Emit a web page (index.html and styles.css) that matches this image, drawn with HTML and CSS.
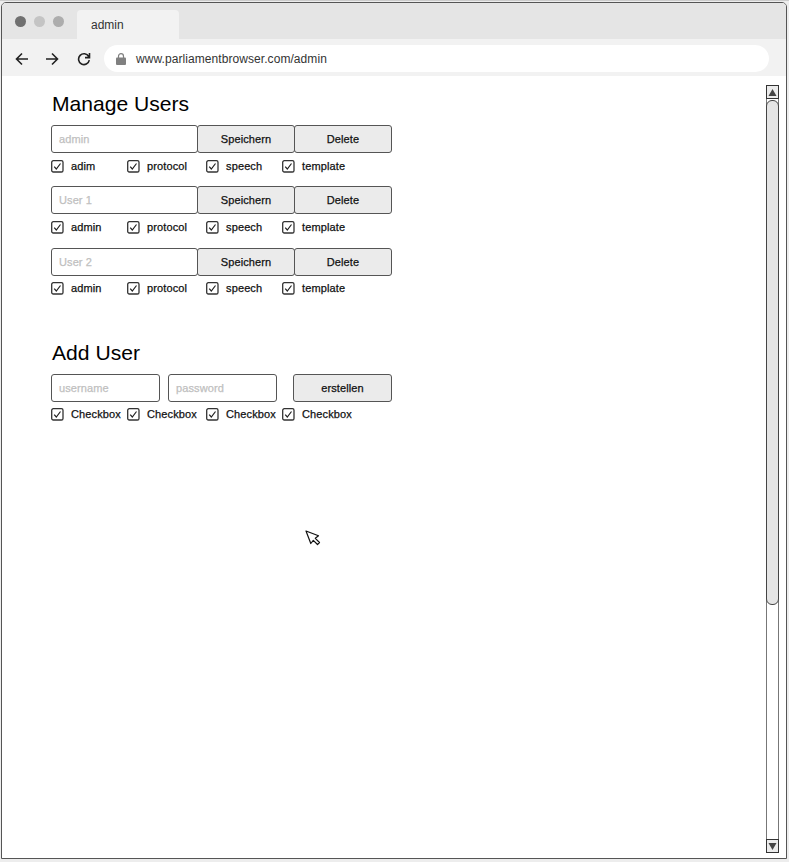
FILE: index.html
```html
<!DOCTYPE html>
<html lang="de">
<head>
<meta charset="utf-8">
<title>admin</title>
<link rel="stylesheet" href="styles.css">
</head>
<body>
<svg class="defs" width="0" height="0" aria-hidden="true">
  <symbol id="check" viewBox="0 0 13 13"><rect x=".7" y=".7" width="11.300" height="11.300" rx="1.600" fill="#fff" stroke="#333" stroke-width="1.300"/><path d="M3.200 6.600 5.300 9l4.200-5.500" fill="none" stroke="#222" stroke-width="1.200"/></symbol>
</svg>
<div class="window">
  <header class="tabs">
    <div class="dots"><i class="dot dark"></i><i class="dot light"></i><i class="dot mid"></i></div>
    <div class="tab">admin</div>
  </header>
  <nav class="toolbar">
    <svg class="nav-icon" viewBox="0 0 14 14"><path d="M13 7H2M7 1.500 1.500 7 7 12.500"/></svg>
    <svg class="nav-icon forward" viewBox="0 0 14 14"><path d="M1 7h11M7 1.500 12.500 7 7 12.500"/></svg>
    <svg class="nav-icon reload" viewBox="0 0 14 14"><path d="M11.700 4.500A5.400 5.400 0 1 0 12.300 8.200M12.500 1v4.600H8"/></svg>
    <div class="address">
      <svg class="lock" viewBox="0 0 10 12"><rect y="4.500" width="10" height="7.500" rx="1" fill="#808080"/><path d="M2.500 5V3.200a2.500 2.500 0 0 1 5 0V5" fill="none" stroke="#808080" stroke-width="1.200"/></svg>
      <span>www.parliamentbrowser.com/admin</span>
    </div>
  </nav>
  <div class="page">
    <main>
      <section class="manage">
        <h1>Manage Users</h1>
        <div class="user">
          <div class="fields"><div class="field">admin</div><div class="button">Speichern</div><div class="button">Delete</div></div>
          <div class="checks"><label><svg><use href="#check"/></svg>adim</label><label><svg><use href="#check"/></svg>protocol</label><label><svg><use href="#check"/></svg>speech</label><label><svg><use href="#check"/></svg>template</label></div>
        </div>
        <div class="user">
          <div class="fields"><div class="field">User 1</div><div class="button">Speichern</div><div class="button">Delete</div></div>
          <div class="checks"><label><svg><use href="#check"/></svg>admin</label><label><svg><use href="#check"/></svg>protocol</label><label><svg><use href="#check"/></svg>speech</label><label><svg><use href="#check"/></svg>template</label></div>
        </div>
        <div class="user">
          <div class="fields"><div class="field">User 2</div><div class="button">Speichern</div><div class="button">Delete</div></div>
          <div class="checks"><label><svg><use href="#check"/></svg>admin</label><label><svg><use href="#check"/></svg>protocol</label><label><svg><use href="#check"/></svg>speech</label><label><svg><use href="#check"/></svg>template</label></div>
        </div>
      </section>
      <section class="add">
        <h1>Add User</h1>
        <div class="fields new"><div class="field">username</div><div class="field">password</div><div class="button">erstellen</div></div>
        <div class="checks"><label><svg><use href="#check"/></svg>Checkbox</label><label><svg><use href="#check"/></svg>Checkbox</label><label><svg><use href="#check"/></svg>Checkbox</label><label><svg><use href="#check"/></svg>Checkbox</label></div>
      </section>
    </main>
    <div class="scrollbar">
      <div class="arrow"><svg viewBox="0 0 9 7"><path d="M4.500 0 8.500 7h-8z"/></svg></div>
      <div class="track"><div class="thumb"></div></div>
      <div class="arrow down"><svg viewBox="0 0 9 7"><path d="M4.500 7 8.500 0h-8z"/></svg></div>
    </div>
  </div>
</div>
<svg class="cursor" viewBox="0 0 16 16"><path d="M1 1 13.500 5.800 10.300 8.300 14.500 12.500 12.500 14.500 8.300 10.300 5.800 13.500Z" fill="#fff" stroke="#111" stroke-width="1.200" stroke-linejoin="round"/></svg>
</body>
</html>
```
FILE: styles.css
```css
* { box-sizing: border-box; }
body {
  margin: 0;
  height: 862px;
  overflow: hidden;
  padding: 1px 2px 3px 1px;
  border-top: 1px solid #ccc;
  background: #ededed;
  font-family: "Liberation Sans", Arial, sans-serif;
  color: #111;
}
.defs { position: absolute; }
.window {
  height: 857px;
  display: flex;
  flex-direction: column;
  background: #fff;
  border: 1px solid #555;
  border-radius: 5px 5px 0 0;
  overflow: hidden;
}
.tabs { height: 36px; flex: none; display: flex; align-items: flex-end; background: #e5e5e5; }
.dots { width: 75px; height: 36px; display: flex; gap: 8px; padding: 13px 0 0 13px; }
.dot { width: 11px; height: 11px; border-radius: 50%; }
.dark { background: #707070; }
.light { background: #c4c4c4; }
.mid { background: #adadad; }
.tab {
  width: 102px;
  height: 29px;
  padding-left: 14px;
  border-radius: 4px 4px 0 0;
  background: #f2f2f2;
  font-size: 12px;
  line-height: 30px;
  color: #333;
}
.toolbar { height: 37px; flex: none; display: flex; align-items: center; padding: 2px 17px 0 13px; background: #f2f2f2; }
.nav-icon { width: 14px; height: 14px; margin-right: 16px; fill: none; stroke: #222; stroke-width: 1.6; }
.nav-icon.forward { margin-right: 18px; }
.nav-icon.reload { margin-right: 13px; }
.address {
  flex: 1;
  height: 27px;
  display: flex;
  align-items: center;
  padding-left: 12px;
  border-radius: 14px;
  background: #fff;
  font-size: 12px;
  letter-spacing: .07px;
  color: #333;
}
.lock { width: 10px; height: 12px; margin-right: 10px; }
.page { flex: 1; display: flex; justify-content: space-between; }
main { padding: 15px 0 0 49px; }
h1 { margin: 0 0 8px 1px; font-size: 21.1px; line-height: 26px; font-weight: 400; color: #000; }
.user { margin-bottom: 13px; height: 48px; }
.user:last-child { padding-top: 1px; }
.fields { display: flex; width: 341px; font-size: 11px; letter-spacing: .1px; -webkit-text-stroke: .25px; }
.field, .button { height: 28px; line-height: 26px; border: 1px solid #555; border-radius: 3px; }
.field { width: 147px; padding-left: 7px; color: #c0c0c0; background: #fff; }
.button { width: 98px; background: #ebebeb; text-align: center; }
.user .button { margin-left: -1px; width: 98px; }
.new .field { width: 109px; margin-right: 8px; }
.new .button { width: 99px; margin-left: auto; }
.checks {
  display: grid;
  grid-template-columns: 76px 79px 76px 80px;
  padding-top: 6px;
  font-size: 11px;
  line-height: 14px;
  letter-spacing: .13px;
  -webkit-text-stroke: .25px;
}
.user:last-child .checks, .add .checks { padding-top: 5px; }
.checks label { display: flex; align-items: center; white-space: nowrap; }
.checks svg { width: 13px; height: 13px; margin-right: 7px; flex: none; }
.add { margin-top: 45px; }
.scrollbar { width: 13px; height: 769px; margin: 8px 7px 0 0; padding-top: 1px; display: flex; flex-direction: column; }
.arrow { height: 14px; flex: none; display: flex; align-items: center; justify-content: center; border: 1px solid #333; background: #ebebeb; }
.arrow svg { width: 9px; height: 7px; fill: #444; }
.track { flex: 1; padding-top: 1px; border: solid #777; border-width: 0 1px; }
.thumb { height: 505px; margin: 0 -1px; border: 1px solid #444; border-radius: 6px; background: #e5e5e5; }
.cursor { position: absolute; left: 305px; top: 530px; width: 16px; height: 16px; }
```
